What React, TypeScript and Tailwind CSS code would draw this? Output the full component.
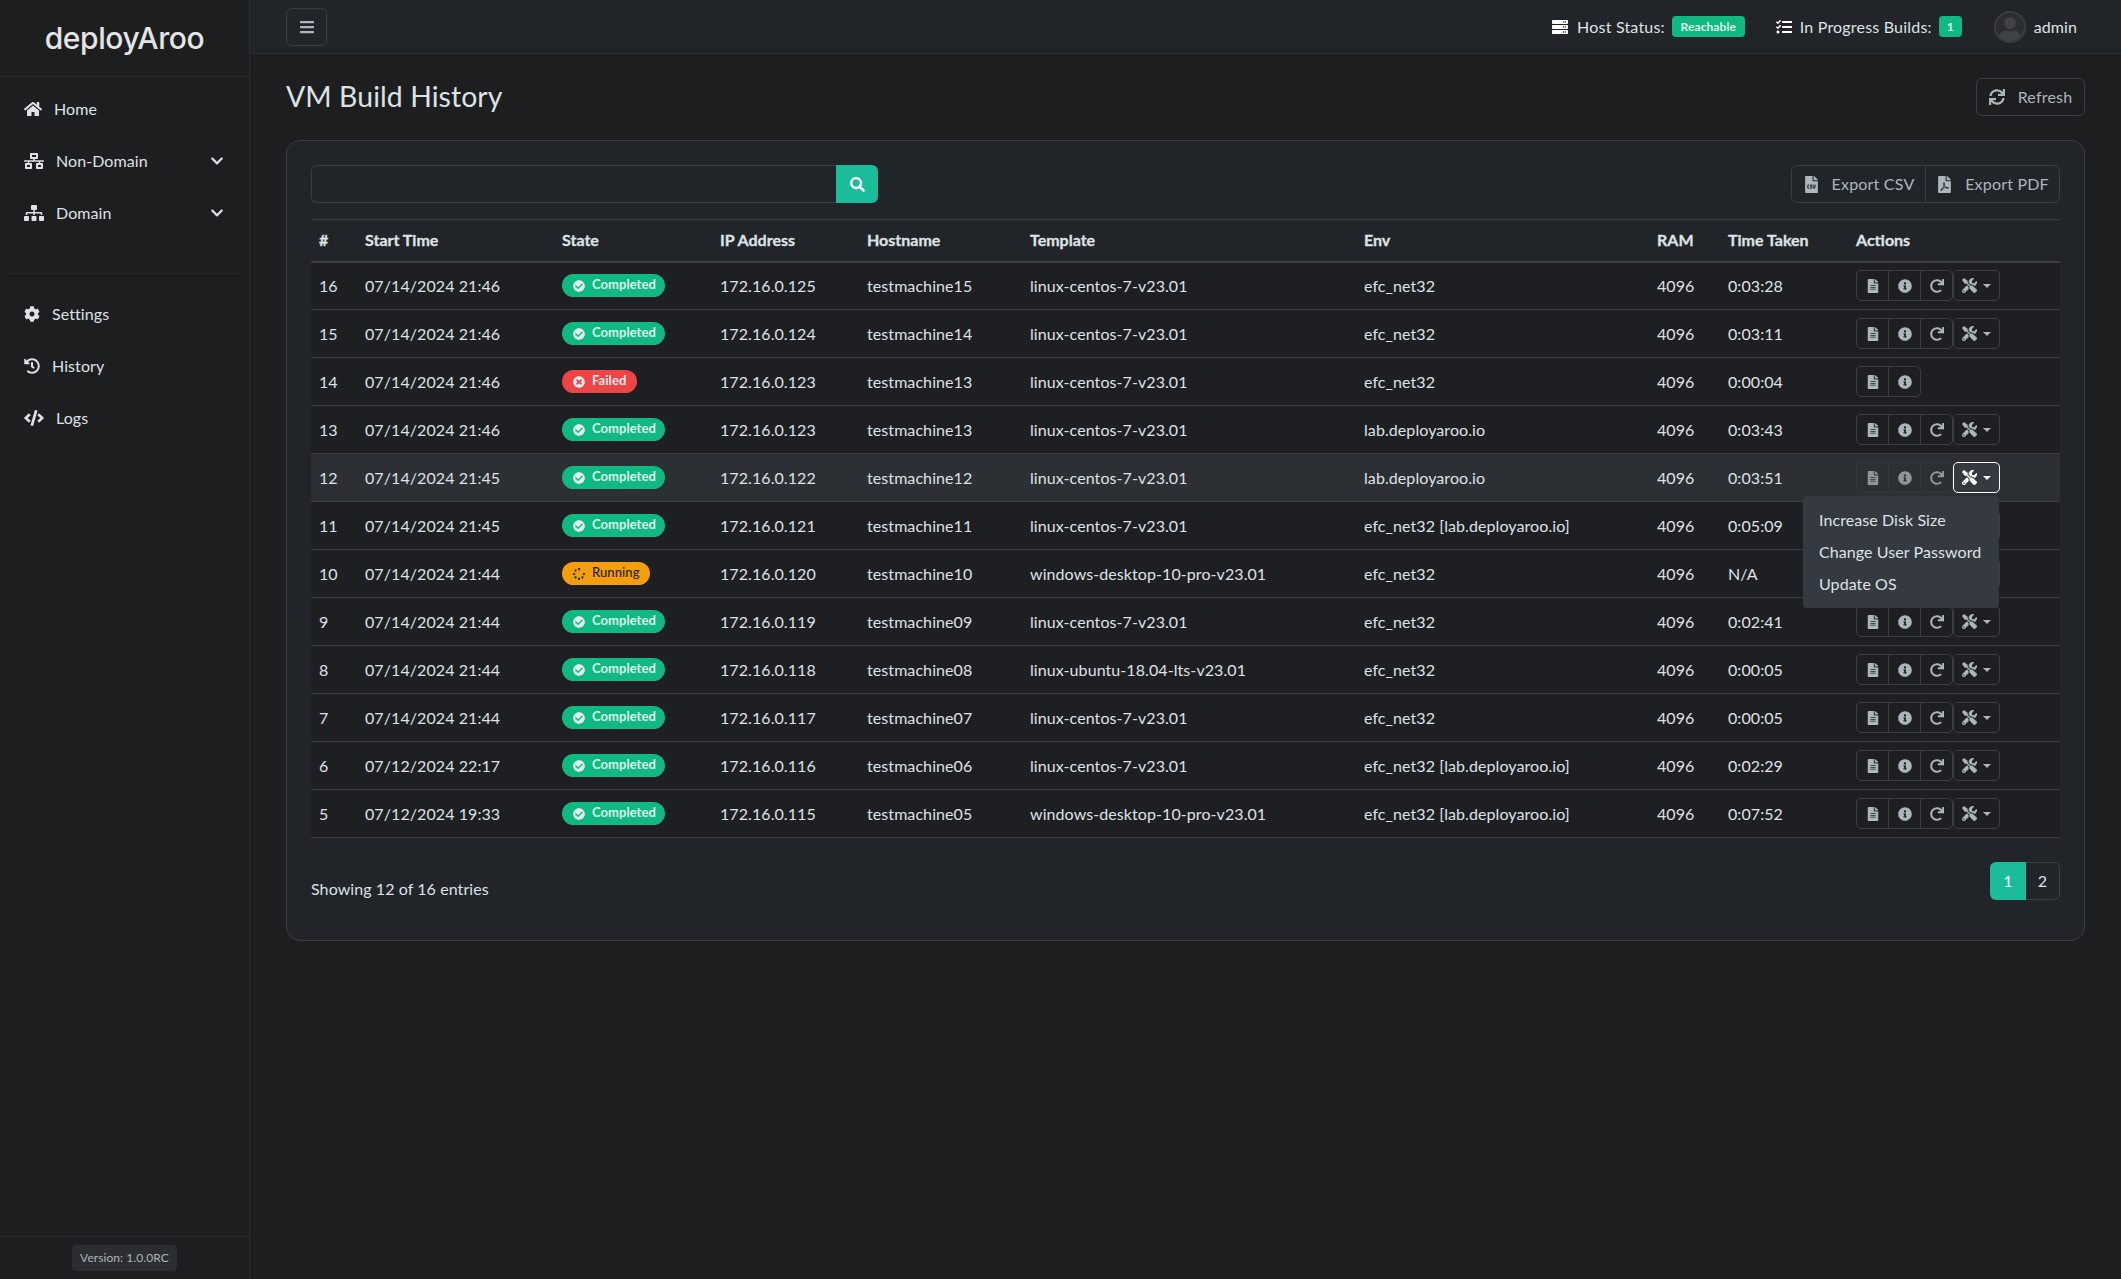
import type { ReactNode } from 'react';
import {
  FaBars,
  FaCheckCircle,
  FaChevronDown,
  FaCode,
  FaCog,
  FaFileAlt,
  FaFileCsv,
  FaFilePdf,
  FaHistory,
  FaHome,
  FaInfoCircle,
  FaNetworkWired,
  FaRedo,
  FaSearch,
  FaServer,
  FaSitemap,
  FaSpinner,
  FaSync,
  FaTasks,
  FaTimesCircle,
  FaTools,
  FaUser,
} from 'react-icons/fa';

type Build = {
  id: number;
  start: string;
  state: 'Completed' | 'Failed' | 'Running';
  ip: string;
  host: string;
  template: string;
  env: string;
  time: string;
};

const builds: Build[] = [
  { id: 16, start: '07/14/2024 21:46', state: 'Completed', ip: '172.16.0.125', host: 'testmachine15', template: 'linux-centos-7-v23.01', env: 'efc_net32', time: '0:03:28' },
  { id: 15, start: '07/14/2024 21:46', state: 'Completed', ip: '172.16.0.124', host: 'testmachine14', template: 'linux-centos-7-v23.01', env: 'efc_net32', time: '0:03:11' },
  { id: 14, start: '07/14/2024 21:46', state: 'Failed', ip: '172.16.0.123', host: 'testmachine13', template: 'linux-centos-7-v23.01', env: 'efc_net32', time: '0:00:04' },
  { id: 13, start: '07/14/2024 21:46', state: 'Completed', ip: '172.16.0.123', host: 'testmachine13', template: 'linux-centos-7-v23.01', env: 'lab.deployaroo.io', time: '0:03:43' },
  { id: 12, start: '07/14/2024 21:45', state: 'Completed', ip: '172.16.0.122', host: 'testmachine12', template: 'linux-centos-7-v23.01', env: 'lab.deployaroo.io', time: '0:03:51' },
  { id: 11, start: '07/14/2024 21:45', state: 'Completed', ip: '172.16.0.121', host: 'testmachine11', template: 'linux-centos-7-v23.01', env: 'efc_net32 [lab.deployaroo.io]', time: '0:05:09' },
  { id: 10, start: '07/14/2024 21:44', state: 'Running', ip: '172.16.0.120', host: 'testmachine10', template: 'windows-desktop-10-pro-v23.01', env: 'efc_net32', time: 'N/A' },
  { id: 9, start: '07/14/2024 21:44', state: 'Completed', ip: '172.16.0.119', host: 'testmachine09', template: 'linux-centos-7-v23.01', env: 'efc_net32', time: '0:02:41' },
  { id: 8, start: '07/14/2024 21:44', state: 'Completed', ip: '172.16.0.118', host: 'testmachine08', template: 'linux-ubuntu-18.04-lts-v23.01', env: 'efc_net32', time: '0:00:05' },
  { id: 7, start: '07/14/2024 21:44', state: 'Completed', ip: '172.16.0.117', host: 'testmachine07', template: 'linux-centos-7-v23.01', env: 'efc_net32', time: '0:00:05' },
  { id: 6, start: '07/12/2024 22:17', state: 'Completed', ip: '172.16.0.116', host: 'testmachine06', template: 'linux-centos-7-v23.01', env: 'efc_net32 [lab.deployaroo.io]', time: '0:02:29' },
  { id: 5, start: '07/12/2024 19:33', state: 'Completed', ip: '172.16.0.115', host: 'testmachine05', template: 'windows-desktop-10-pro-v23.01', env: 'efc_net32 [lab.deployaroo.io]', time: '0:07:52' },
];

const columns = [
  { label: '#', width: 'w-[46px]' },
  { label: 'Start Time', width: 'w-[197px]' },
  { label: 'State', width: 'w-[158px]' },
  { label: 'IP Address', width: 'w-[147px]' },
  { label: 'Hostname', width: 'w-[163px]' },
  { label: 'Template', width: 'w-[334px]' },
  { label: 'Env', width: 'w-[293px]' },
  { label: 'RAM', width: 'w-[71px]' },
  { label: 'Time Taken', width: 'w-[128px]' },
  { label: 'Actions', width: 'w-[212px]' },
];

const NavItem = ({ icon, label, chevron }: { icon: ReactNode; label: string; chevron?: boolean }) => (
  <div className="flex h-[52px] items-center gap-3 pl-6 pr-[25px] text-[#dee2e6]">
    {icon}
    <span className="flex-1">{label}</span>
    {chevron && <FaChevronDown size={14} />}
  </div>
);

const StateBadge = ({ state }: { state: Build['state'] }) => {
  if (state === 'Failed') {
    return (
      <span className="inline-flex h-[23px] items-center gap-[7px] rounded-full bg-[#ef4444] pl-[11px] pr-[11px] text-[13px] font-bold text-[#e9ecef]">
        <FaTimesCircle size={12} />
        <span className="-mt-[2px]">Failed</span>
      </span>
    );
  }
  if (state === 'Running') {
    return (
      <span className="inline-flex h-[23px] items-center gap-[7px] rounded-full bg-[#f59e0b] pl-[11px] pr-[10px] text-[13px] font-medium text-[#212529]">
        <FaSpinner size={12} />
        <span className="-mt-[2px]">Running</span>
      </span>
    );
  }
  return (
    <span className="inline-flex h-[23px] items-center gap-[7px] rounded-full bg-[#10b981] pl-[11px] pr-[9px] text-[13px] font-bold tracking-[0.05px] text-[#dff5ec]">
      <FaCheckCircle size={12} />
      <span className="-mt-[2px]">Completed</span>
    </span>
  );
};

const RowActions = ({ build }: { build: Build }) => {
  const open = build.id === 12;
  const failed = build.state === 'Failed';
  const border = open ? 'border-[#34373b]' : 'border-[#3a3d41]';
  const iconColor = open ? 'text-[#8f959b]' : 'text-[#adb5bd]';
  return (
    <div className="relative flex w-fit items-center">
      <div className={`flex h-[31px] rounded-[5px] border ${border} ${iconColor}`}>
        <span className="flex w-[31px] items-center justify-center">
          <FaFileAlt size={14} />
        </span>
        <span className={`flex w-[32px] items-center justify-center border-l ${border}`}>
          <FaInfoCircle size={14} />
        </span>
        {!failed && (
          <span className={`flex w-[32px] items-center justify-center border-l ${border}`}>
            <FaRedo size={14} />
          </span>
        )}
      </div>
      {!failed && (
        <div
          className={`flex h-[31px] w-[47px] items-center justify-center gap-[6px] rounded-[5px] border ${
            open ? 'border-white bg-[#343a40] text-white' : 'border-[#3a3d41] text-[#adb5bd]'
          }`}
        >
          <FaTools size={15} />
          <span className="h-0 w-0 border-x-[4px] border-t-[4px] border-x-transparent border-t-current" />
        </div>
      )}
      {open && (
        <div className="absolute -left-[53px] top-[34px] z-10 w-[196px] rounded-[4px] bg-[#343a40] py-2 text-[#dee2e6]">
          <div className="flex h-8 items-center px-4">Increase Disk Size</div>
          <div className="flex h-8 items-center px-4">Change User Password</div>
          <div className="flex h-8 items-center px-4">Update OS</div>
        </div>
      )}
    </div>
  );
};

const App = () => {
  return (
    <div className="flex min-h-screen bg-[#1d1e20] font-['Lato','Liberation_Sans',sans-serif] text-[16px] tracking-[0.08px] text-[#dee2e6]">
      <aside className="flex w-[250px] shrink-0 flex-col border-r border-[#2b2d30]">
        <div className="flex h-[77px] items-center justify-center border-b border-[#2b2d30]">
          <span className="font-['Inter',sans-serif] text-[30px] font-medium tracking-[-0.4px] text-[#e4e4e4]">
            deployAroo
          </span>
        </div>
        <nav className="pt-[6px]">
          <NavItem icon={<FaHome size={18} />} label="Home" />
          <NavItem icon={<FaNetworkWired size={20} />} label="Non-Domain" chevron />
          <NavItem icon={<FaSitemap size={20} />} label="Domain" chevron />
        </nav>
        <div className="mx-2 mb-[14px] mt-[34px] border-t border-[#232528]" />
        <nav>
          <NavItem icon={<FaCog size={16} />} label="Settings" />
          <NavItem icon={<FaHistory size={16} />} label="History" />
          <NavItem icon={<FaCode size={20} />} label="Logs" />
        </nav>
        <div className="mt-auto flex h-[43px] items-start justify-center border-t border-[#2b2d30] pt-2">
          <span className="flex h-[26px] w-[105px] items-center justify-center rounded-[4px] bg-[#2b2d30] text-[12px] text-[#adb5bd]">
            Version: 1.0.0RC
          </span>
        </div>
      </aside>

      <div className="flex min-w-0 flex-1 flex-col">
        <header className="flex h-[54px] items-center justify-between border-b border-[#2b2d30] bg-[#212529] pl-[36px] pr-[44px]">
          <button className="flex h-[38px] w-[41px] items-center justify-center rounded-[6px] border border-[#3a3d41] text-[#adb5bd]">
            <FaBars size={16} />
          </button>
          <div className="flex items-center">
            <FaServer size={16} className="mr-[9px] text-white" />
            <span className="mr-[7px] tracking-[0.2px]">Host Status:</span>
            <span className="flex h-[21px] w-[73px] items-center justify-center rounded-[4px] bg-[#10b981] text-[12px] font-bold text-[#dff5ec]">
              Reachable
            </span>
            <FaTasks size={16} className="ml-[31px] mr-[8px] text-white" />
            <span className="mr-[7px] tracking-[0.2px]">In Progress Builds:</span>
            <span className="flex h-[21px] w-[23px] items-center justify-center rounded-[4px] bg-[#10b981] text-[12px] font-bold text-[#dff5ec]">
              1
            </span>
            <span className="ml-[32px] mr-[8px] flex h-[32px] w-[32px] items-end justify-center overflow-hidden rounded-full border-2 border-[#3a3d41] bg-[#2b2d30] text-[#3f4347]">
              <FaUser size={24} />
            </span>
            <span>admin</span>
          </div>
        </header>

        <main className="px-[36px] pt-[24px]">
          <div className="mb-[24px] flex h-[38px] items-center justify-between">
            <h1 className="-mt-[2px] text-[28.4px] leading-[38px] text-[#dee2e6]">VM Build History</h1>
            <button className="flex h-[38px] w-[109px] items-center justify-center gap-[13px] rounded-[6px] border border-[#3a3d41] tracking-[0.2px] text-[#adb5bd]">
              <FaSync size={16} />
              Refresh
            </button>
          </div>

          <section className="h-[801px] rounded-[14px] border border-[#3a3d41] bg-[#212529] px-6 pt-6">
            <div className="mb-4 flex items-center justify-between">
              <div className="flex h-[38px] w-[567px]">
                <input className="min-w-0 flex-1 rounded-l-[6px] border border-r-0 border-[#3a3d41] bg-[#212529]" />
                <button className="flex w-[42px] items-center justify-center rounded-r-[6px] bg-[#1abc9c] text-white">
                  <FaSearch size={15} />
                </button>
              </div>
              <div className="flex h-[38px] rounded-[6px] border border-[#3a3d41] tracking-[0.2px] text-[#adb5bd]">
                <span className="flex w-[133px] items-center justify-center gap-[12px]">
                  <FaFileCsv size={17} />
                  Export CSV
                </span>
                <span className="flex w-[134px] items-center justify-center gap-[12px] border-l border-[#3a3d41]">
                  <FaFilePdf size={17} />
                  Export PDF
                </span>
              </div>
            </div>

            <table className="w-full table-fixed border-collapse">
              <colgroup>
                {columns.map((column) => (
                  <col key={column.label} className={column.width} />
                ))}
              </colgroup>
              <thead>
                <tr className="h-[42px] border-b-2 border-t border-b-[#3a3d41] border-t-[#3a3d41]">
                  {columns.map((column) => (
                    <th
                      key={column.label}
                      className="px-2 text-left font-bold tracking-normal text-[#dee2e6] [-webkit-text-stroke:0.3px_#dee2e6]"
                    >
                      {column.label}
                    </th>
                  ))}
                </tr>
              </thead>
              <tbody>
                {builds.map((build) => (
                  <tr
                    key={build.id}
                    className={`h-[48px] border-b border-[#3a3d41] ${build.id === 12 ? 'bg-[#2c2f33]' : 'bg-[#1e1f22]'}`}
                  >
                    <td className="px-2">{build.id}</td>
                    <td className="px-2">{build.start}</td>
                    <td className="px-2">
                      <div className="flex">
                        <StateBadge state={build.state} />
                      </div>
                    </td>
                    <td className="px-2">{build.ip}</td>
                    <td className="px-2">{build.host}</td>
                    <td className="px-2">{build.template}</td>
                    <td className="px-2">{build.env}</td>
                    <td className="px-2">4096</td>
                    <td className="px-2">{build.time}</td>
                    <td className="px-2">
                      <RowActions build={build} />
                    </td>
                  </tr>
                ))}
              </tbody>
            </table>

            <div className="mt-[24px] flex items-start justify-between">
              <span className="mt-[15px]">Showing 12 of 16 entries</span>
              <div className="flex h-[38px]">
                <span className="flex w-[36px] items-center justify-center rounded-l-[6px] bg-[#1abc9c] text-white">1</span>
                <span className="flex w-[34px] items-center justify-center rounded-r-[6px] border border-l-0 border-[#3a3d41]">2</span>
              </div>
            </div>
          </section>
        </main>
      </div>
    </div>
  );
};

export default App;
